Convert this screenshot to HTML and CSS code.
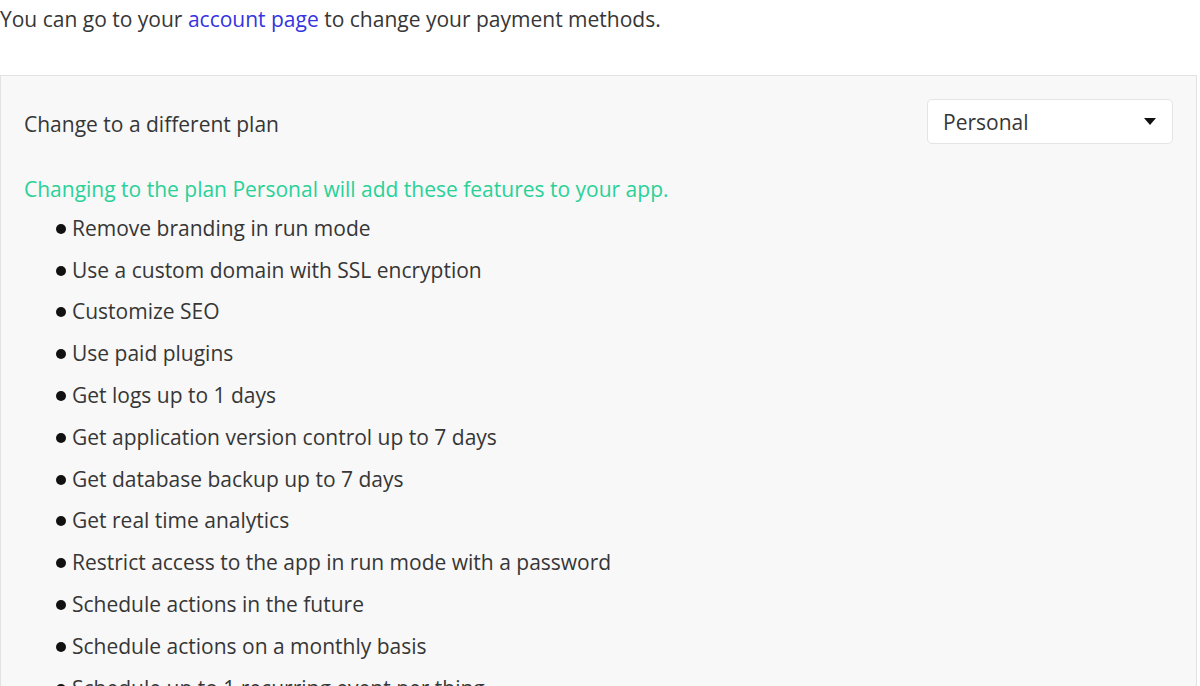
FILE: index.html
```html
<!DOCTYPE html>
<html>
<head>
<meta charset="utf-8">
<link rel="stylesheet" href="styles.css">
</head>
<body>
<p class="intro">You can go to your <a class="link" href="#">account page</a> to change your payment methods.</p>
<section class="panel">
  <div class="panel-head">
    <span class="panel-title">Change to a different plan</span>
    <div class="select">
      <span>Personal</span>
      <svg class="caret" width="12" height="7" viewBox="0 0 12 7"><path d="M0 0 H12 L6 7 Z" fill="#111"/></svg>
    </div>
  </div>
  <p class="notice">Changing to the plan Personal will add these features to your app.</p>
  <ul class="features">
    <li>Remove branding in run mode</li>
    <li>Use a custom domain with SSL encryption</li>
    <li>Customize SEO</li>
    <li>Use paid plugins</li>
    <li>Get logs up to 1 days</li>
    <li>Get application version control up to 7 days</li>
    <li>Get database backup up to 7 days</li>
    <li>Get real time analytics</li>
    <li>Restrict access to the app in run mode with a password</li>
    <li>Schedule actions in the future</li>
    <li>Schedule actions on a monthly basis</li>
    <li>Schedule up to 1 recurring event per thing</li>
  </ul>
</section>
</body>
</html>
```

FILE: styles.css
```css
html, body {
  margin: 0;
  padding: 0;
  background: #fff;
  overflow: hidden;
}
body {
  font-family: "Open Sans", "DejaVu Sans", sans-serif;
  font-size: 21px;
  color: #363636;
  line-height: 30px;
}
.intro {
  margin: 4px 0 41px 0;
}
.link {
  color: #3434e0;
  text-decoration: none;
}
.panel {
  width: 1197px;
  border: 1px solid #e2e2e2;
  background: #f8f8f8;
  padding: 23px 0 0 0;
  box-sizing: border-box;
}
.panel-head {
  display: flex;
  justify-content: space-between;
  align-items: center;
  padding: 0 23px 0 23px;
}
.panel-title {
  padding-top: 5px;
}
.select {
  width: 246px;
  height: 45px;
  box-sizing: border-box;
  background: #fff;
  border: 1px solid #e4e4e4;
  border-radius: 5px;
  display: flex;
  align-items: center;
  justify-content: space-between;
  padding: 0 16px 0 15px;
}
.caret {
  display: block;
}
.notice {
  margin: 30px 0 0 23px;
  color: #2ad197;
}
.features {
  list-style: none;
  margin: 3px 0 0 0;
  padding: 0 0 0 55px;
}
.features li {
  height: 41.8px;
  display: flex;
  align-items: center;
}
.features li::before {
  content: "";
  width: 10px;
  height: 10px;
  border-radius: 50%;
  background: #111;
  margin: 2px 6px 0 0;
  flex: none;
}
```
